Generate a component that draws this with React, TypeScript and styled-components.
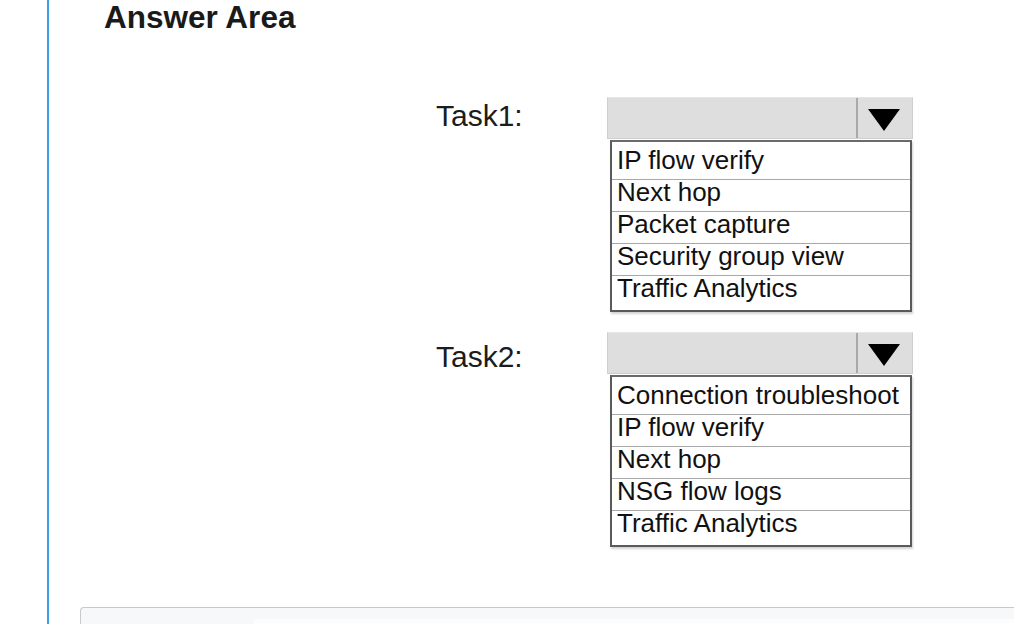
import React from "react";
import styled, { createGlobalStyle } from "styled-components";

const GlobalStyle = createGlobalStyle`
  html, body {
    margin: 0;
    padding: 0;
    background: #ffffff;
    overflow: hidden;
  }
  body {
    font-family: "Liberation Sans", Arial, sans-serif;
    color: #111;
  }
`;

const Page = styled.div`
  width: 1014px;
  height: 624px;
  overflow: hidden;
  display: flex;
`;

const Gutter = styled.div`
  width: 47px;
  flex: none;
`;

const Main = styled.main`
  flex: 1;
  border-left: 2px solid #3b9fe6;
  display: flex;
  flex-direction: column;
  min-width: 0;
`;

const Heading = styled.h2`
  margin: 0 0 0 55px;
  font-size: 31.5px;
  line-height: 34px;
  font-weight: 700;
  color: #1a1a1a;
`;

const Tasks = styled.div`
  margin: 63px 0 0 387px;
  display: flex;
  flex-direction: column;
  gap: 20px;
`;

const TaskRow = styled.div`
  display: grid;
  grid-template-columns: 171px 306px;
  align-items: start;
`;

const Label = styled.div<{ $offset: number }>`
  font-size: 30px;
  line-height: 38px;
  margin-top: ${(p) => p.$offset}px;
  color: #1c1c1c;
`;

const Dropdown = styled.div`
  display: flex;
  flex-direction: column;
`;

const Header = styled.div`
  height: 40px;
  display: flex;
  background: #dedede;
  border: 1px solid #cfcfcf;
  border-top-color: #e6e6e6;
`;

const HeaderField = styled.div`
  flex: 1;
  border-right: 2px solid #a9a9a9;
`;

const HeaderButton = styled.div`
  width: 54px;
  display: flex;
  align-items: center;
  justify-content: center;
  padding: 4px 2px 0 0;
  box-sizing: border-box;
`;

const List = styled.ul`
  list-style: none;
  margin: 1px 0 0 3px;
  padding: 6px 0 3px;
  width: 298px;
  background: #fff;
  border: 2px solid #5a5a5a;
  border-top-color: #6a6a6a;
  box-shadow: 1px 2px 2px rgba(0, 0, 0, 0.18);
`;

const Item = styled.li`
  height: 25px;
  padding: 0 0 6px 5px;
  font-size: 26px;
  line-height: 25px;
  color: #111;
  white-space: nowrap;
  border-top: 1px solid #a8a8a8;
  &:first-child {
    border-top: none;
  }
`;

const Panel = styled.div`
  margin: 60px -40px 0 31px;
  flex: 1;
  background: #f7f8fa;
  border: 1px solid #c9c9c9;
  border-right: none;
  border-bottom: none;
  border-top-left-radius: 4px;
  padding: 11px 0 0 173px;
`;

const PanelInner = styled.div`
  height: 40px;
  background: #fdfdfd;
`;

const Arrow = () => (
  <svg width="32" height="22" viewBox="0 0 32 22" aria-hidden="true">
    <polygon points="0,0 32,0 16,22" fill="#000" />
  </svg>
);

const tasks = [
  {
    label: "Task1:",
    offset: 0,
    options: [
      "IP flow verify",
      "Next hop",
      "Packet capture",
      "Security group view",
      "Traffic Analytics",
    ],
  },
  {
    label: "Task2:",
    offset: 6,
    options: [
      "Connection troubleshoot",
      "IP flow verify",
      "Next hop",
      "NSG flow logs",
      "Traffic Analytics",
    ],
  },
];

export default function App() {
  return (
    <>
      <GlobalStyle />
      <Page>
        <Gutter />
        <Main>
          <Heading>Answer Area</Heading>
          <Tasks>
            {tasks.map((t) => (
              <TaskRow key={t.label}>
                <Label $offset={t.offset}>{t.label}</Label>
                <Dropdown>
                  <Header>
                    <HeaderField />
                    <HeaderButton>
                      <Arrow />
                    </HeaderButton>
                  </Header>
                  <List>
                    {t.options.map((o) => (
                      <Item key={o}>{o}</Item>
                    ))}
                  </List>
                </Dropdown>
              </TaskRow>
            ))}
          </Tasks>
          <Panel>
            <PanelInner />
          </Panel>
        </Main>
      </Page>
    </>
  );
}
